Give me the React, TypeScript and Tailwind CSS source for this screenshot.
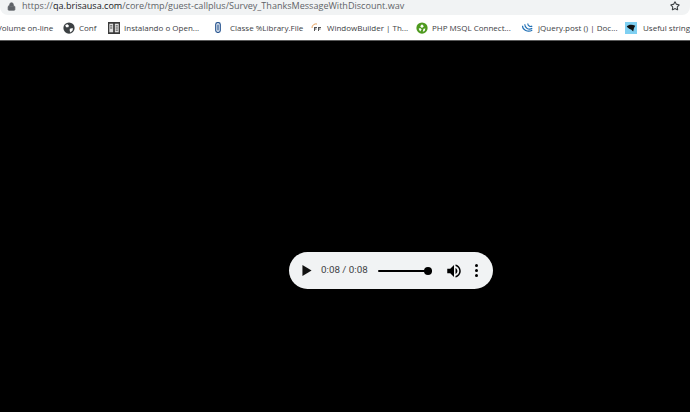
import React from 'react';
import { Star, Lock } from 'lucide-react';

const Bookmark = ({ icon, label, className }: { icon?: React.ReactNode; label: string; className: string }) => (
  <div className={`flex items-center shrink-0 ${className}`}>
    {icon}
    <span className="whitespace-nowrap">{label}</span>
  </div>
);

const GlobeIcon = () => (
  <svg viewBox="0 0 16 16" className="w-[12px] h-[12px] mr-[4px] shrink-0">
    <circle cx="8" cy="8" r="7.5" fill="#3c4043" />
    <path d="M3 4l3-1 2 2-1 2-3 0zM9 9l4-1 0 3-3 3-1-2z" fill="#fff" />
  </svg>
);

const BookIcon = () => (
  <svg viewBox="0 0 14 14" className="w-[12px] h-[12px] mr-[4px] shrink-0">
    <rect x="0" y="0" width="14" height="14" fill="#3a3a3a" />
    <rect x="1.5" y="2" width="4.5" height="10" fill="#ddd" />
    <rect x="8" y="2" width="4.5" height="10" fill="#ddd" />
    <path d="M2.5 4.5h2.500M2.500 7h2.500M9 4.500h2.500M9 7h2.500M9 9.500h2.500" stroke="#333" strokeWidth="1" />
  </svg>
);

const ClipIcon = () => (
  <svg viewBox="0 0 8 14" className="w-[6px] h-[11px] mr-[9px] shrink-0">
    <rect x="1" y="0.5" width="6" height="13" rx="2.500" fill="#fff" stroke="#1f4e8c" strokeWidth="1.600" />
    <rect x="3.200" y="3" width="1.600" height="8" fill="#1f4e8c" />
  </svg>
);

const EfIcon = () => (
  <svg viewBox="0 0 12 12" className="w-[12px] h-[12px] mr-[4px] shrink-0">
    <path d="M1 6a4 4 0 0 1 5-4" fill="none" stroke="#e8a25c" strokeWidth="1" />
    <path d="M3 5h3v1H4v.500h1.500v1H4V9H3zM7 5h3v1H8v.500h1.500v1H8V9H7z" fill="#555" />
  </svg>
);

const GreenIcon = () => (
  <svg viewBox="0 0 16 16" className="w-[12px] h-[12px] mr-[4px] shrink-0">
    <circle cx="8" cy="8" r="7.500" fill="#4e9a1f" />
    <path d="M8 3l2.500 2.500L8 8 5.500 5.500zM3.500 9l2-1 2 2-2 2.500zM10 9l2.500-.5-1 3.500-2.500 1z" fill="#fff" />
  </svg>
);

const JqueryIcon = () => (
  <svg viewBox="0 0 16 16" className="w-[12px] h-[12px] mr-[5px] shrink-0" fill="none" stroke="#1f6fb5" strokeWidth="1.500">
    <path d="M2 5c0 6 7 9 13 6" />
    <path d="M5 3c0 5 5 8 10 5.500" />
    <path d="M9 2c0 3 3 5 6 3.500" />
  </svg>
);

const CapIcon = () => (
  <svg viewBox="0 0 14 14" className="w-[12px] h-[12px] mr-[6px] shrink-0">
    <rect width="14" height="14" fill="#7fd0f2" />
    <path d="M2 5.500C4 3 8 2.500 12 4.500L10.500 7 9.500 11 7.500 9 5 8z" fill="#111" />
  </svg>
);

const App = () => (
  <div className="w-[690px] h-[412px] overflow-hidden bg-black flex flex-col font-['Open_Sans','Noto_Sans',sans-serif]">
    <div className="h-[41px] bg-white shrink-0 flex flex-col">
      <div className="h-[15px] bg-[#f1f3f4] rounded-b-[8px] flex items-center pl-[7px] pr-[10px] pb-[3px]">
        <Lock className="w-[9px] h-[9px] text-[#5f6368] mr-[6px]" fill="#5f6368" />
        <span className="text-[9.07px] leading-none whitespace-nowrap text-[#5f6368]">
          https://<span className="text-[#202124]">qa.brisausa.com</span>/core/tmp/guest-callplus/Survey_ThanksMessageWithDiscount.wav
        </span>
        <Star className="ml-auto w-[10px] h-[10px] text-[#3c4043]" strokeWidth={2.5} />
      </div>
      <div className="flex-1 flex items-center text-[8px] text-[#3c4043] overflow-hidden border-b border-[#5a5a5a]">
        <Bookmark label="Volume on-line" className="-ml-[3px] w-[66px]" />
        <Bookmark icon={<GlobeIcon />} label="Conf" className="w-[45px]" />
        <Bookmark icon={<BookIcon />} label="Instalando o Open..." className="w-[107px]" />
        <Bookmark icon={<ClipIcon />} label="Classe %Library.File" className="w-[96px]" />
        <Bookmark icon={<EfIcon />} label="WindowBuilder | Th..." className="w-[105px]" />
        <Bookmark icon={<GreenIcon />} label="PHP MSQL Connect..." className="w-[105px]" />
        <Bookmark icon={<JqueryIcon />} label="jQuery.post () | Doc..." className="w-[104px]" />
        <Bookmark icon={<CapIcon />} label="Useful string" className="w-[65px]" />
      </div>
    </div>
    <div className="flex-1 pt-[211px] pl-[289px]">
      <div className="w-[204px] h-[37px] rounded-full bg-[#f1f3f4] flex items-center pl-[13px] font-['Roboto',sans-serif]">
        <svg viewBox="0 0 10 12" className="w-[10px] h-[11px] shrink-0">
          <path d="M0 0l10 6-10 6z" fill="#111" />
        </svg>
        <span className="ml-[9px] text-[9.800px] text-[#3c4043] whitespace-nowrap w-[46px]">0:08 / 0:08</span>
        <div className="ml-[11px] relative w-[54px] h-[2px] bg-black rounded-full shrink-0">
          <div className="absolute right-0 -top-[3px] w-[8px] h-[8px] rounded-full bg-black" />
        </div>
        <svg viewBox="0 0 24 24" className="ml-[13px] w-[18px] h-[18px] shrink-0">
          <path d="M3 9v6h4l5 5V4L7 9H3zm13.500 3c0-1.770-1.020-3.290-2.500-4.030v8.050c1.480-.73 2.500-2.250 2.500-4.020zM14 3.230v2.060c2.890.86 5 3.540 5 6.710s-2.110 5.850-5 6.710v2.060c4.010-.91 7-4.490 7-8.770s-2.990-7.860-7-8.770z" fill="#000" />
        </svg>
        <div className="ml-[12px] flex flex-col gap-[2px]">
          <div className="w-[3px] h-[3px] rounded-full bg-black" />
          <div className="w-[3px] h-[3px] rounded-full bg-black" />
          <div className="w-[3px] h-[3px] rounded-full bg-black" />
        </div>
      </div>
    </div>
  </div>
);

export default App;
